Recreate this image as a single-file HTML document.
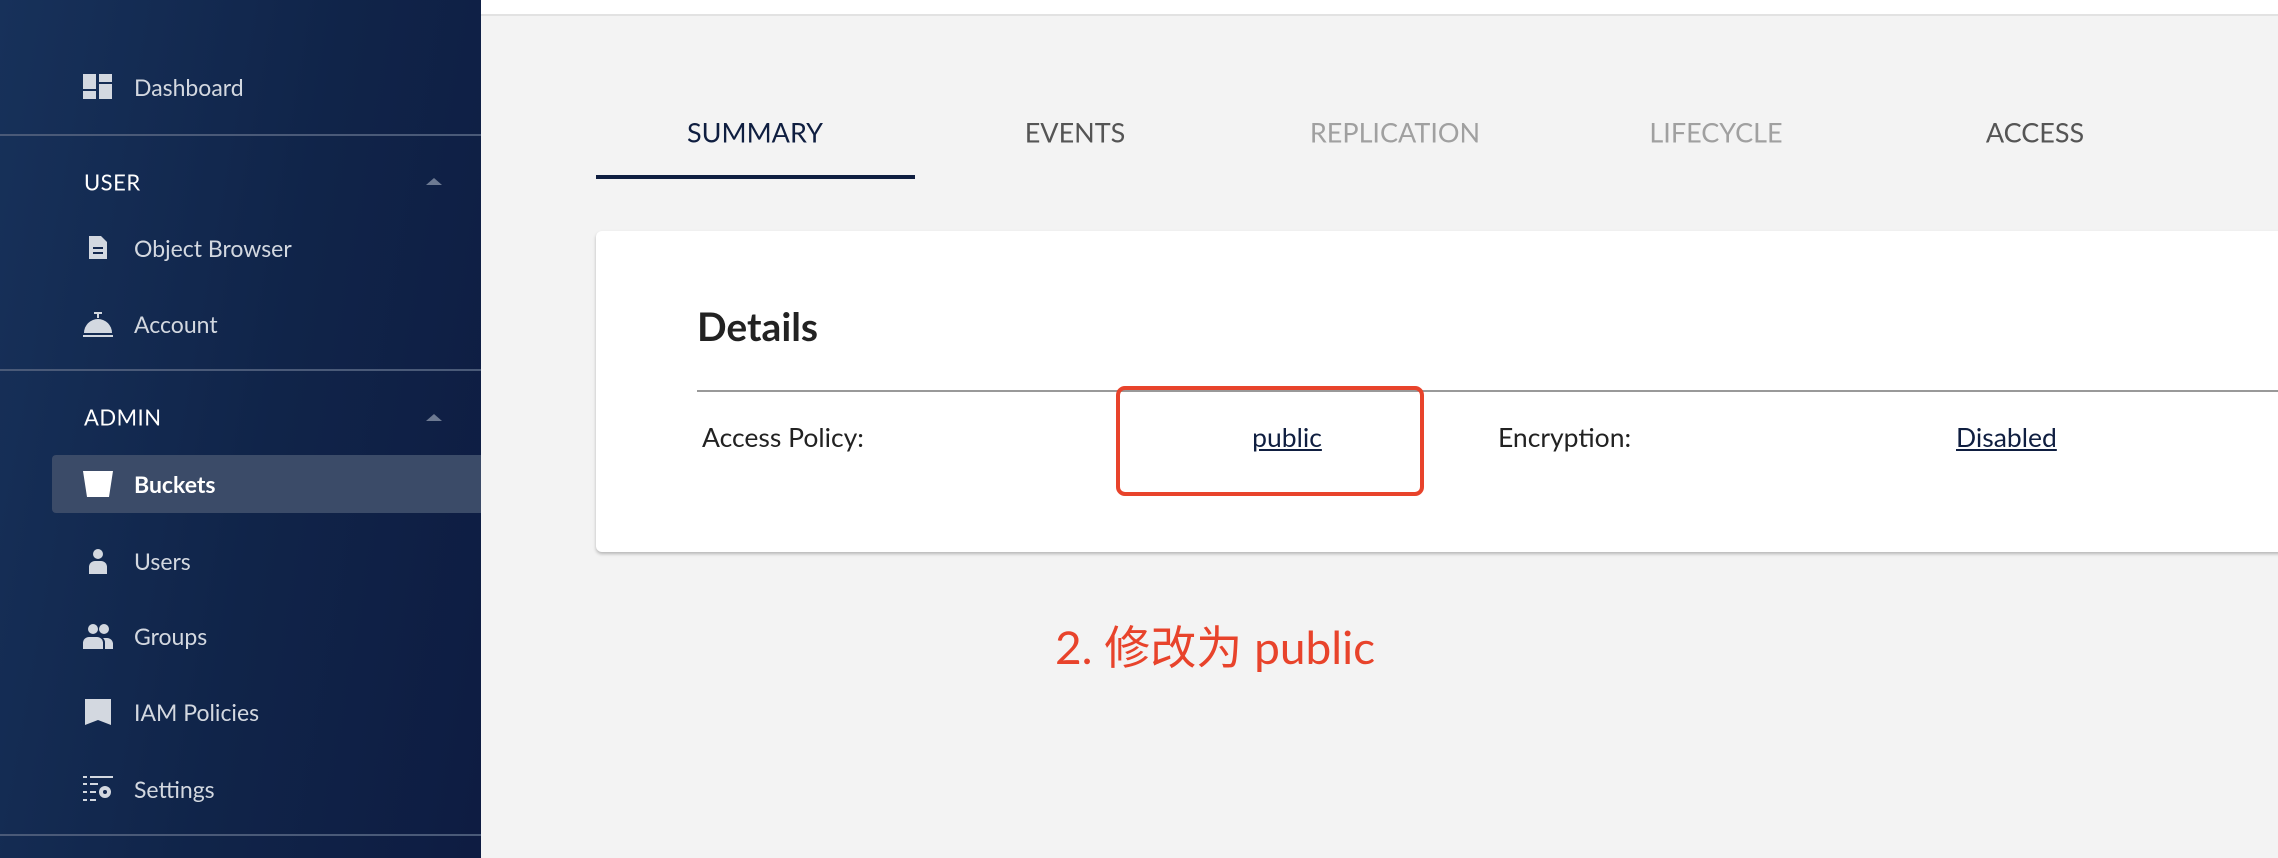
<!DOCTYPE html>
<html><head><meta charset="utf-8"><style>
*{margin:0;padding:0;box-sizing:border-box}
body{width:2278px;height:858px;overflow:hidden;background:#f3f3f3;font-family:"Lato","Liberation Sans","Noto Sans CJK SC",sans-serif;position:relative}
.sb{position:absolute;left:0;top:0;width:481px;height:858px;background:linear-gradient(100deg,#17315a 0%,#102449 55%,#0e1c42 100%)}
.it{position:absolute;left:134px;color:#d3d8e0;font-size:23px;transform:translateY(-50%);white-space:nowrap}
.hd{position:absolute;left:84px;color:#fff;font-size:22px;transform:translateY(-50%);letter-spacing:.5px}
.dv{position:absolute;left:0;width:481px;height:2px;background:#4a5a78}
.ic{position:absolute;left:83px;width:30px;height:30px;transform:translateY(-50%)}
.chev{position:absolute;left:426px;width:0;height:0;border-left:8px solid transparent;border-right:8px solid transparent;border-bottom:7px solid #6d7a92}
.tab{position:absolute;top:132px;transform:translate(-50%,-50%);font-size:27px;white-space:nowrap}
.t{position:absolute;transform:translateY(-50%);font-size:26.5px;color:#222;white-space:nowrap}
a{color:#0f1e40}
</style></head><body>
<div class="sb">
 <svg class="ic" style="top:87px" viewBox="0 0 30 30"><rect x="0" y="2" width="13" height="15" fill="#d3d8e0"/><rect x="0" y="19" width="13" height="8" fill="#d3d8e0"/><rect x="16" y="2" width="13" height="8" fill="#d3d8e0"/><rect x="16" y="12" width="13" height="15" fill="#d3d8e0"/></svg>
 <div class="it" style="top:87px">Dashboard</div>
 <div class="dv" style="top:134px"></div>
 <div class="hd" style="top:182px">USER</div><div class="chev" style="top:178px"></div>
 <svg class="ic" style="top:248px" viewBox="0 0 30 30"><path d="M6 3h12l6 6v17H6z" fill="#d3d8e0"/><rect x="10" y="14" width="10" height="2" fill="#14284f"/><rect x="10" y="19" width="10" height="2" fill="#14284f"/></svg>
 <div class="it" style="top:248px">Object Browser</div>
 <svg class="ic" style="top:324px" viewBox="0 0 30 30"><rect x="11" y="3" width="8" height="2" fill="#d3d8e0"/><rect x="14" y="4" width="2" height="5" fill="#d3d8e0"/><path d="M1 24a14 14 0 0 1 28 0z" fill="#d3d8e0"/><rect x="0" y="26" width="30" height="2" fill="#d3d8e0"/></svg>
 <div class="it" style="top:324px">Account</div>
 <div class="dv" style="top:369px"></div>
 <div class="hd" style="top:417px">ADMIN</div><div class="chev" style="top:414px"></div>
 <div style="position:absolute;left:52px;top:455px;width:429px;height:58px;background:#3b4b68;border-radius:4px 0 0 4px"></div>
 <svg class="ic" style="top:484px" viewBox="0 0 30 30"><path d="M0 2h30l-4 26H4z" fill="#fff"/></svg>
 <div class="it" style="top:484px;color:#fff;font-weight:bold">Buckets</div>
 <svg class="ic" style="top:561px" viewBox="0 0 30 30"><circle cx="15" cy="8" r="5" fill="#d3d8e0"/><path d="M6 28v-7a6 6 0 0 1 6-6h6a6 6 0 0 1 6 6v7z" fill="#d3d8e0"/></svg>
 <div class="it" style="top:561px">Users</div>
 <svg class="ic" style="top:636px" viewBox="0 0 30 30"><circle cx="10" cy="8" r="5" fill="#d3d8e0"/><circle cx="21" cy="8" r="5" fill="#d3d8e0"/><path d="M0 28v-6a6 6 0 0 1 6-6h8a6 6 0 0 1 6 6v6z" fill="#d3d8e0"/><path d="M22 28v-6a6 6 0 0 0-2-5h4a6 6 0 0 1 6 6v5z" fill="#d3d8e0"/></svg>
 <div class="it" style="top:636px">Groups</div>
 <svg class="ic" style="top:712px" viewBox="0 0 30 30"><path d="M2 2h26v26l-13-5-13 5z" fill="#d3d8e0"/></svg>
 <div class="it" style="top:712px">IAM Policies</div>
 <svg class="ic" style="top:789px" viewBox="0 0 30 30"><g fill="#d3d8e0"><rect x="0" y="2" width="4" height="2"/><rect x="7" y="2" width="23" height="2"/><rect x="0" y="9" width="4" height="2"/><rect x="7" y="9" width="8" height="2"/><rect x="0" y="17" width="4" height="2"/><rect x="7" y="17" width="6" height="2"/><rect x="0" y="25" width="4" height="2"/><rect x="7" y="25" width="6" height="2"/><circle cx="22" cy="18" r="6"/></g><circle cx="22" cy="18" r="2" fill="#14284f"/></svg>
 <div class="it" style="top:789px">Settings</div>
 <div class="dv" style="top:834px"></div>
</div>
<div style="position:absolute;left:481px;top:0;right:0;height:16px;background:#fff;border-bottom:2px solid #e2e2e2"></div>
<div class="tab" style="left:755px;color:#0f1e40">SUMMARY</div>
<div style="position:absolute;left:596px;top:175px;width:319px;height:4px;background:#0f1e40"></div>
<div class="tab" style="left:1075px;color:#555">EVENTS</div>
<div class="tab" style="left:1395px;color:#a0a0a0">REPLICATION</div>
<div class="tab" style="left:1716px;color:#a0a0a0">LIFECYCLE</div>
<div class="tab" style="left:2035px;color:#555">ACCESS</div>
<div style="position:absolute;left:596px;top:231px;width:1700px;height:321px;background:#fff;border-radius:6px;box-shadow:0 2px 3px rgba(0,0,0,.25)"></div>
<div class="t" style="left:697px;top:327px;font-size:39px;font-weight:bold">Details</div>
<div style="position:absolute;left:697px;top:390px;right:0;height:2px;background:#999"></div>
<div class="t" style="left:702px;top:437px">Access Policy:</div>
<div class="t" style="left:1287px;top:437px;transform:translate(-50%,-50%)"><a href="#">public</a></div>
<div style="position:absolute;left:1116px;top:386px;width:308px;height:110px;border:4px solid #e8432b;border-radius:9px"></div>
<div class="t" style="left:1498px;top:437px">Encryption:</div>
<div class="t" style="left:1956px;top:437px"><a href="#">Disabled</a></div>
<div class="t" style="left:1055px;top:645px;font-size:46px;color:#e8432b">2. 修改为 public</div>
</body></html>
